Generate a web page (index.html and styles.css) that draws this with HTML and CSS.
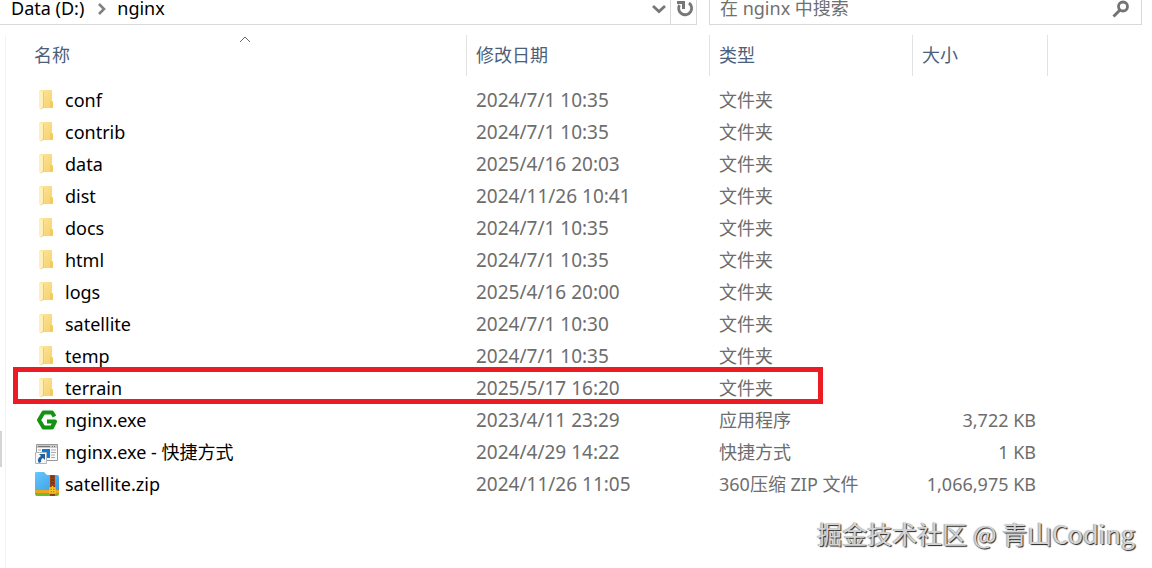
FILE: index.html
```html
<!DOCTYPE html>
<html lang="zh-CN">
<head>
<meta charset="utf-8">
<title>nginx</title>
<link rel="stylesheet" href="styles.css">
</head>
<body>
<svg class="symbols" aria-hidden="true">
  <defs>
    <linearGradient id="folder-fill" x1="0" y1="0" x2="1" y2="1">
      <stop offset="0" stop-color="#fde69c"/><stop offset="1" stop-color="#f5cf6a"/>
    </linearGradient>
    <linearGradient id="zip-fill" x1="0" y1="0" x2="1" y2="1">
      <stop offset="0" stop-color="#66c8fb"/><stop offset="1" stop-color="#3797e4"/>
    </linearGradient>
  </defs>
  <symbol id="folder" viewBox="0 0 24 24">
    <path d="M5 2h12v11l1 1v6H5z" fill="url(#folder-fill)"/>
    <path d="M15 14l3-1v7h-3z" fill="#f3ca68"/>
    <path d="M4 2l4 2v15l-2 3-2-2z" fill="#fff0bb"/>
    <path d="M8.500 4v15l-2 2" fill="none" stroke="#edca70"/>
  </symbol>
</svg>
<header class="toolbar">
  <nav class="address" aria-label="路径">
    <button class="crumb" type="button">Data (D:)</button>
    <svg class="crumb-arrow" viewBox="0 0 10 12"><path d="M2 1l5 5-5 5" fill="none" stroke="#808080" stroke-width="2.6"/></svg>
    <button class="crumb" type="button">nginx</button>
    <button class="history" type="button" aria-label="历史"><svg viewBox="0 0 14 10"><path d="M1 2l6 5.500 6-5.500" fill="none" stroke="#777" stroke-width="2.800"/></svg></button>
    <button class="refresh" type="button" aria-label="刷新"><svg viewBox="0 0 18 18"><path d="M13 3A6.500 6.500 0 1 1 3.500 5" fill="none" stroke="#777" stroke-width="2.800"/><path d="M1 1h8v8H6V4H1z" fill="#777"/></svg></button>
  </nav>
  <form class="search">
    <input class="search-box" type="text" aria-label="搜索" placeholder="在 nginx 中搜索">
    <button class="search-button" type="button" aria-label="开始搜索"><svg viewBox="0 0 18 18"><circle cx="11" cy="6.500" r="4.500" fill="none" stroke="#737373" stroke-width="2.800"/><path d="M8 10l-6.500 6.500" stroke="#737373" stroke-width="3"/></svg></button>
  </form>
</header>
<main class="pane">
  <table class="files">
    <colgroup><col><col class="col-date"><col class="col-type"><col class="col-size"><col class="col-rest"></colgroup>
    <thead>
      <tr>
        <th><button class="sort" type="button">名称</button><svg class="sort-mark" viewBox="0 0 12 7"><path d="M1 6l5-5 5 5" fill="none" stroke="#666"/></svg></th>
        <th><button class="sort" type="button">修改日期</button></th>
        <th><button class="sort" type="button">类型</button></th>
        <th><button class="sort" type="button">大小</button></th>
        <th></th>
      </tr>
    </thead>
    <tbody>
      <tr><td><div class="name"><svg class="icon"><use href="#folder"/></svg>conf</div></td><td class="date">2024/7/1 10:35</td><td>文件夹</td><td></td><td></td></tr>
      <tr><td><div class="name"><svg class="icon"><use href="#folder"/></svg>contrib</div></td><td class="date">2024/7/1 10:35</td><td>文件夹</td><td></td><td></td></tr>
      <tr><td><div class="name"><svg class="icon"><use href="#folder"/></svg>data</div></td><td class="date">2025/4/16 20:03</td><td>文件夹</td><td></td><td></td></tr>
      <tr><td><div class="name"><svg class="icon"><use href="#folder"/></svg>dist</div></td><td class="date">2024/11/26 10:41</td><td>文件夹</td><td></td><td></td></tr>
      <tr><td><div class="name"><svg class="icon"><use href="#folder"/></svg>docs</div></td><td class="date">2024/7/1 10:35</td><td>文件夹</td><td></td><td></td></tr>
      <tr><td><div class="name"><svg class="icon"><use href="#folder"/></svg>html</div></td><td class="date">2024/7/1 10:35</td><td>文件夹</td><td></td><td></td></tr>
      <tr><td><div class="name"><svg class="icon"><use href="#folder"/></svg>logs</div></td><td class="date">2025/4/16 20:00</td><td>文件夹</td><td></td><td></td></tr>
      <tr><td><div class="name"><svg class="icon"><use href="#folder"/></svg>satellite</div></td><td class="date">2024/7/1 10:30</td><td>文件夹</td><td></td><td></td></tr>
      <tr><td><div class="name"><svg class="icon"><use href="#folder"/></svg>temp</div></td><td class="date">2024/7/1 10:35</td><td>文件夹</td><td></td><td></td></tr>
      <tr class="marked"><td><div class="name"><svg class="icon"><use href="#folder"/></svg>terrain</div></td><td class="date">2025/5/17 16:20</td><td>文件夹</td><td></td><td></td></tr>
      <tr><td><div class="name"><svg class="icon" viewBox="0 0 24 24"><path d="M19.500 8.500L17 4.500H8.500L4 12l4.500 7.500H17l3-6h-8" fill="none" stroke="#129412" stroke-width="4" stroke-linejoin="round"/></svg>nginx.exe</div></td><td class="date">2023/4/11 23:29</td><td>应用程序</td><td class="size">3,722 KB</td><td></td></tr>
      <tr><td><div class="name"><svg class="icon" viewBox="0 0 24 24"><path d="M1.500 4.500h21v16h-21z" fill="#fafafa" stroke="#999"/><path d="M2 5h20v3H2z" fill="#c6cbd0"/><path d="M3 6.500h12M17 6.500h1M19 6.500h1" stroke="#777"/><path d="M7 9h8v9H7z" fill="#0c7bdc"/><path d="M3 10h3M16 10h5M16 12.500h5M16 15h4M16 17.500h4" stroke="#aaa"/><path d="M.5 12.500h11v11H.5z" fill="#f5f8fb" stroke="#b5b5b5"/><path d="M4 14h6v6l-2-2c-2 1-2 2-2 4l-2 1c-2-3-1-5 2-7z" fill="#245f9f"/></svg>nginx.exe - 快捷方式</div></td><td class="date">2024/4/29 14:22</td><td>快捷方式</td><td class="size">1 KB</td><td></td></tr>
      <tr><td><div class="name"><svg class="icon" viewBox="0 0 24 24"><path d="M0 1q0-1 1-1h8l3 3h10q2 0 2 2v16H0z" fill="url(#zip-fill)"/><path d="M0 18h24v3H0z" fill="#efa51b"/><path d="M0 21h24v1q0 2-2 2H2q-2 0-2-2z" fill="#72b92c"/><path d="M15 3h5v21h-5z" fill="#94421e"/><path d="M16 5h3M16 8h3M16 11h3" stroke="#5b2c1c"/><path d="M15 16h5v5h-5zM17.500 14v7M15 18.500h5" fill="none" stroke="#ffc928" stroke-width="1.300"/></svg>satellite.zip</div></td><td class="date">2024/11/26 11:05</td><td>360压缩 ZIP 文件</td><td class="size">1,066,975 KB</td><td></td></tr>
    </tbody>
  </table>
  <div class="scroll-edge"></div>
  <p class="watermark">掘金技术社区 @ 青山Coding</p>
</main>
</body>
</html>
```

FILE: styles.css
```css
* { box-sizing: border-box; }
body {
  margin: 0;
  min-height: 100vh;
  display: flex;
  flex-direction: column;
  background: #fff;
  color: #000;
  font: 18px/24px "Noto Sans", "Noto Sans CJK SC", sans-serif;
}
button { border: 0; padding: 0; background: none; color: inherit; font: inherit; }
button svg { display: block; }
.symbols { position: absolute; width: 0; height: 0; }
.toolbar { display: flex; gap: 12px; height: 25px; padding-right: 10px; }
.address {
  flex: 1;
  display: flex;
  align-items: flex-start;
  border: solid #d9d9d9;
  border-width: 0 1px 1px 0;
}
.crumb { height: 24px; margin-top: -4px; line-height: 24px; }
.crumb:first-child { padding-left: 11px; }
.crumb-arrow { width: 10px; height: 12px; margin: 3px 10px 0 13px; }
.history { margin: 4px 4px 0 auto; }
.history svg { width: 14px; height: 10px; }
.refresh { height: 24px; padding: 0 2px 6px 5px; border-left: 1px solid #d9d9d9; }
.refresh svg { width: 18px; height: 18px; }
.search {
  display: flex;
  align-items: flex-start;
  width: 433px;
  padding: 0 11px 0 10px;
  border: solid #d9d9d9;
  border-width: 0 1px 1px;
}
.search-box {
  flex: 1;
  height: 26px;
  min-width: 0;
  margin-top: -5px;
  padding: 0;
  border: 0;
  outline: 0;
  background: none;
  font: inherit;
}
.search-box::placeholder { color: #707070; opacity: 1; }
.search-button svg { width: 18px; height: 18px; }
.pane { position: relative; flex: 1; display: flex; align-items: stretch; padding: 10px 0 0 5px; }
.pane::before { content: ""; width: 1px; background: #f3f3f3; }
.files {
  flex: 1;
  align-self: flex-start;
  table-layout: fixed;
  border-collapse: separate;
  border-spacing: 0;
}
.col-date { width: 243px; }
.col-type { width: 203px; }
.col-size { width: 135px; }
.col-rest { width: 104px; }
th {
  position: relative;
  height: 41px;
  padding: 0 0 2px 9px;
  border-right: 1px solid #e2e2e2;
  color: #4c607a;
  font-weight: 400;
  text-align: left;
}
th:first-child { padding-left: 28px; }
th:last-child { border-right: 0; }
.sort { display: block; }
.sort-mark { position: absolute; top: 1px; left: 52%; transform: translateX(-50%); width: 12px; height: 7px; }
tbody::before { content: ""; display: block; height: 8px; }
td { height: 32px; padding: 0 0 0 9px; color: #6d6d6d; white-space: nowrap; }
td:first-child { padding-left: 29px; }
.name { display: flex; align-items: center; gap: 6px; color: #000; }
.icon { width: 24px; height: 24px; }
.date { font-size: 19px; }
.size { padding-right: 12px; text-align: right; }
.marked { position: relative; }
.marked td:first-child::after {
  content: "";
  position: absolute;
  top: -5px;
  bottom: 0;
  left: 7px;
  right: 329px;
  border: 5px solid #ec1c24;
}
.scroll-edge { position: absolute; left: 0; top: 406px; width: 2px; height: 36px; background: #d4d4d4; }
.watermark {
  position: absolute;
  right: 17px;
  bottom: 18px;
  margin: 0;
  color: #d4d4d4;
  font: 25px/34px "Noto Sans CJK SC", sans-serif;
  text-shadow: 1px 1px 1px #222, -1px 0 1px #aaa;
}
```
